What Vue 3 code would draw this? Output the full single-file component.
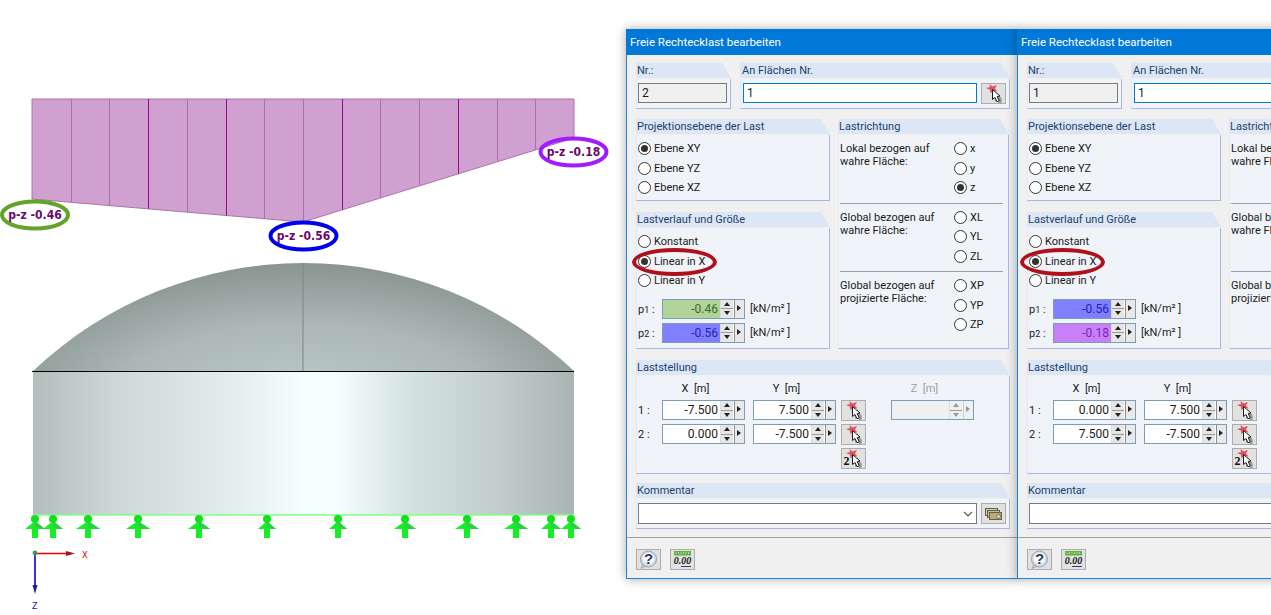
<template>
  <div class="page">
    <!-- model view -->
    <svg class="model" width="626" height="615" viewBox="0 0 626 615">
      <defs>
        <radialGradient id="domeFill" gradientUnits="userSpaceOnUse" cx="0" cy="0" r="140" gradientTransform="translate(303 400) scale(2.4 1)">
          <stop offset="0" stop-color="#bccaca" />
          <stop offset="0.55" stop-color="#abb8b6" />
          <stop offset="1" stop-color="#88928f" />
        </radialGradient>
        <linearGradient id="wallFill" x1="0" y1="0" x2="1" y2="0">
          <stop offset="0" stop-color="#b2bebc" />
          <stop offset="0.15" stop-color="#cbd8d6" />
          <stop offset="0.35" stop-color="#dfeceb" />
          <stop offset="0.5" stop-color="#f4ffff" />
          <stop offset="0.56" stop-color="#f4ffff" />
          <stop offset="0.7" stop-color="#d3e1df" />
          <stop offset="0.86" stop-color="#c0cdcb" />
          <stop offset="1" stop-color="#a9b5b3" />
        </linearGradient>
      </defs>

      <polygon points="32,99 574,99 574,138 303,222 32,199" fill="#d0a0d0" stroke="#ab74ab" stroke-width="1" />
      <line
        v-for="rib in ribs"
        :key="rib.x"
        :x1="rib.x"
        y1="99"
        :x2="rib.x"
        :y2="rib.y"
        :stroke="rib.color"
        stroke-width="1"
      />

      <g v-for="tag in tags" :key="tag.text">
        <ellipse :cx="tag.x" :cy="tag.y" rx="33" ry="13.5" fill="none" :stroke="tag.color" stroke-width="4" />
        <text :x="tag.x" :y="tag.y + 4" text-anchor="middle" class="tag-text">{{ tag.text }}</text>
      </g>

      <path d="M33 371 A393 393 0 0 1 574 371 Z" fill="url(#domeFill)" />
      <line x1="303" y1="263" x2="303" y2="371" stroke="#7b8785" stroke-width="1" />
      <rect x="33" y="372" width="541" height="143" fill="url(#wallFill)" />
      <line x1="32" y1="371.5" x2="574" y2="371.5" stroke="#000" stroke-width="1" />
      <line x1="33" y1="515" x2="574" y2="515" stroke="#80ff80" stroke-width="1.5" />

      <g v-for="s in supports" :key="s.x">
        <polygon :points="`${s.x},521 ${s.x + s.w},529 ${s.x - s.w},529`" fill="#12f025" />
        <polygon :points="`${s.x},521 ${s.x + s.w},529 ${s.x},529`" fill="#2fcf45" />
        <rect :x="s.x - 3" y="528" width="6" height="10" fill="#12f025" />
        <circle :cx="s.x" cy="519" r="4" fill="#10e020" />
      </g>

      <!-- axes -->
      <line x1="35" y1="553.5" x2="68" y2="553.5" stroke="#f00000" stroke-width="1.6" />
      <polygon points="66,551 75,553.5 66,556" fill="#a01818" />
      <text x="82" y="558" class="axis-x">X</text>
      <line x1="35" y1="553" x2="35" y2="588" stroke="#0000e0" stroke-width="1.6" />
      <polygon points="32.5,585 37.5,585 35,594" fill="#20208c" />
      <circle cx="35" cy="553" r="2.4" fill="#3c9a50" />
      <text x="32" y="609" class="axis-z">Z</text>
    </svg>

    <!-- shared button icons -->
    <svg class="icon-defs" width="0" height="0">
      <symbol id="pick" viewBox="0 0 25 21">
        <polygon points="8.5,1 11.5,3.4 16,2 14,5.6 16.5,8.4 12,7.6 9.5,10.5 9,6.8 5,5 9,4" fill="#e4505e" />
        <path d="M14 9 L14 19 L16.5 17.6 L18.5 20.5 L21 19 L20.5 15 Z" fill="#9a9a9a" />
        <path d="M11.5 6.5 L11.5 16.5 L14 14.5 L16 18.8 L18.2 17.7 L16.2 13.5 L19 13 Z" fill="#fff" stroke="#1a1a1a" stroke-width="1" stroke-linejoin="round" />
      </symbol>
    </svg>

    <div v-for="dlg in dialogs" :key="dlg.nr" class="dialog">
      <div class="title">Freie Rechtecklast bearbeiten</div>
      <div class="content">
        <div class="row-top">
          <section class="group nr-group">
            <div class="group-head">Nr.:</div>
            <div class="group-body pad-line">
              <div class="text-box readonly">{{ dlg.nr }}</div>
            </div>
          </section>
          <section class="group surf-group">
            <div class="group-head">An Flächen Nr.</div>
            <div class="group-body pad-line line-flex">
              <div class="text-box focused">1</div>
              <button class="tool-btn"><svg width="25" height="21"><use href="#pick" /></svg></button>
            </div>
          </section>
        </div>

        <div class="row-mid">
          <section class="group">
            <div class="group-head">Projektionsebene der Last</div>
            <div class="group-body radios-body">
              <label v-for="(r, i) in planes" :key="r" class="radio-row">
                <span class="radio" :class="{ on: i === 0 }"></span>{{ r }}
              </label>
            </div>
          </section>

          <section class="group direction">
            <div class="group-head">Lastrichtung</div>
            <div class="group-body dir-body">
              <div v-for="(d, i) in directions" :key="d.text" class="dir-section" :class="{ ruled: i > 0 }">
                <div class="dir-text">{{ d.text }}</div>
                <div>
                  <label v-for="o in d.options" :key="o" class="radio-row">
                    <span class="radio" :class="{ on: o === 'z' }"></span>{{ o }}
                  </label>
                </div>
              </div>
            </div>
          </section>

          <section class="group course">
            <div class="group-head">Lastverlauf und Größe</div>
            <div class="group-body radios-body">
              <label v-for="(r, i) in courses" :key="r" class="radio-row">
                <span class="radio" :class="{ on: i === 1 }"></span>{{ r }}
              </label>
              <div class="p-row first">
                <span class="row-label">p<small>1</small> :</span>
                <div class="spinner" :class="dlg.p1.tone">
                  <span class="spin-value">{{ dlg.p1.value }}</span>
                  <span class="spin-btns"><i class="up"></i><i class="down"></i></span>
                  <span class="spin-more"></span>
                </div>
                <span class="unit">[kN/m² ]</span>
              </div>
              <div class="p-row">
                <span class="row-label">p<small>2</small> :</span>
                <div class="spinner" :class="dlg.p2.tone">
                  <span class="spin-value">{{ dlg.p2.value }}</span>
                  <span class="spin-btns"><i class="up"></i><i class="down"></i></span>
                  <span class="spin-more"></span>
                </div>
                <span class="unit">[kN/m² ]</span>
              </div>
            </div>
            <div class="ring" :style="{ left: dlg.ringLeft + 'px' }"></div>
          </section>
        </div>

        <section class="group position">
          <div class="group-head">Laststellung</div>
          <div class="group-body pos-body">
            <div class="pos-line heads">
              <span class="row-label"></span>
              <span class="pos-head">X&nbsp; [m]</span>
              <span class="pos-head col-y">Y&nbsp; [m]</span>
              <span class="pos-head col-z muted">Z&nbsp; [m]</span>
            </div>
            <div v-for="(p, i) in dlg.pos" :key="i" class="pos-line">
              <span class="row-label">{{ i + 1 }} :</span>
              <div class="spinner">
                <span class="spin-value">{{ p[0] }}</span>
                <span class="spin-btns"><i class="up"></i><i class="down"></i></span>
                <span class="spin-more"></span>
              </div>
              <div class="spinner col-y">
                <span class="spin-value">{{ p[1] }}</span>
                <span class="spin-btns"><i class="up"></i><i class="down"></i></span>
                <span class="spin-more"></span>
              </div>
              <button class="tool-btn pick-col"><svg width="25" height="21"><use href="#pick" /></svg></button>
              <div v-if="i === 0" class="spinner col-z disabled">
                <span class="spin-value"></span>
                <span class="spin-btns"><i class="up"></i><i class="down"></i></span>
                <span class="spin-more"></span>
              </div>
            </div>
            <div class="pos-line">
              <button class="tool-btn pick-last">
                <svg width="25" height="21">
                  <use href="#pick" />
                  <text x="2.5" y="17" class="two">2</text>
                </svg>
              </button>
            </div>
          </div>
        </section>

        <section class="group comment">
          <div class="group-head">Kommentar</div>
          <div class="group-body pad-line line-flex">
            <div class="combo">
              <svg width="10" height="6" viewBox="0 0 10 6"><path d="M1 1 L5 5 L9 1" fill="none" stroke="#555" stroke-width="1.1" /></svg>
            </div>
            <button class="tool-btn">
              <svg width="25" height="21" viewBox="0 0 25 21">
                <rect x="4.5" y="5.5" width="12" height="7" fill="#d6cfa8" stroke="#5f5f4a" />
                <rect x="6.5" y="7.5" width="12" height="7" fill="#c9bf8e" stroke="#5f5f4a" />
                <rect x="8.5" y="9.5" width="12" height="7" fill="#bcae73" stroke="#5f5f4a" />
                <rect x="16" y="12" width="3" height="3" fill="#fff" stroke="#444" stroke-width="0.6" />
              </svg>
            </button>
          </div>
        </section>

        <div class="footer">
          <button class="tool-btn">
            <svg width="25" height="21" viewBox="0 0 25 21">
              <path d="M6.5 15 L5 19.5 L11 17 Z" fill="#c2c8d0" stroke="#8b93a0" stroke-width="0.5" />
              <circle cx="12.5" cy="10" r="8" fill="#d4dae2" stroke="#9aa3b0" />
              <circle cx="12.5" cy="9.5" r="5.8" fill="#f7f8fa" />
              <text x="12.5" y="15" text-anchor="middle" class="help-mark">?</text>
            </svg>
          </button>
          <button class="tool-btn">
            <svg width="25" height="21" viewBox="0 0 25 21">
              <rect x="4" y="2" width="17" height="4.5" fill="#62b044" />
              <path d="M6 3 V5 M8.5 3 V5 M11 3 V5 M13.5 3 V5 M16 3 V5 M18.5 3 V5" stroke="#bfe3a8" stroke-width="0.8" />
              <text x="12.5" y="15" text-anchor="middle" class="zero">0.00</text>
              <path d="M11 17.5 H21" stroke="#2b3f80" stroke-width="1" />
            </svg>
          </button>
        </div>
      </div>
    </div>
  </div>
</template>

<script setup>
const planes = ['Ebene XY', 'Ebene YZ', 'Ebene XZ']
const courses = ['Konstant', 'Linear in X', 'Linear in Y']

const directions = [
  { text: 'Lokal bezogen auf wahre Fläche:', options: ['x', 'y', 'z'] },
  { text: 'Global bezogen auf wahre Fläche:', options: ['XL', 'YL', 'ZL'] },
  { text: 'Global bezogen auf projizierte Fläche:', options: ['XP', 'YP', 'ZP'] }
]

const dialogs = [
  {
    nr: '2',
    ringLeft: -4,
    p1: { value: '-0.46', tone: 'green' },
    p2: { value: '-0.56', tone: 'blue' },
    pos: [['-7.500', '7.500'], ['0.000', '-7.500']]
  },
  {
    nr: '1',
    ringLeft: -7,
    p1: { value: '-0.56', tone: 'blue' },
    p2: { value: '-0.18', tone: 'purple' },
    pos: [['0.000', '7.500'], ['7.500', '-7.500']]
  }
]

const tags = [
  { text: 'p-z -0.46', x: 35, y: 215, color: '#62a32a' },
  { text: 'p-z -0.56', x: 303.5, y: 236, color: '#0000ee' },
  { text: 'p-z -0.18', x: 573.5, y: 152, color: '#a01cff' }
]

// load outline: left 199, peak 222 at the middle, right 138
function lowerEdge(x) {
  if (x <= 303) return 199 + ((x - 32) / 271) * 23
  return 222 - ((x - 303) / 271) * 84
}

const strong = [3, 5, 8, 11]
const ribs = Array.from({ length: 13 }, (_, i) => {
  const x = Math.round(32 + (i + 1) * 38.71) + 0.5
  return { x, y: lowerEdge(x), color: strong.includes(i + 1) ? '#8e0a8e' : '#a873a8' }
})

const supports = [
  { x: 35, w: 10 }, { x: 53, w: 10 }, { x: 88, w: 12 }, { x: 138, w: 12 },
  { x: 199, w: 11 }, { x: 267, w: 9 }, { x: 338, w: 9 }, { x: 405, w: 11 },
  { x: 467, w: 12 }, { x: 516, w: 12 }, { x: 551, w: 10 }, { x: 571, w: 10 }
]
</script>

<style>
html, body {
  margin: 0;
  background: #fff;
  overflow: hidden;
}
</style>

<style scoped>
.page {
  display: flex;
  width: 1271px;
  height: 615px;
  overflow: hidden;
  background: #fff;
  font-family: Roboto, 'Liberation Sans', sans-serif;
  font-size: 11px;
  color: #1a1a1a;
}

.model {
  flex: none;
  display: block;
}

.icon-defs {
  position: absolute;
}

.tag-text {
  font-family: 'DejaVu Sans Condensed', 'DejaVu Sans', sans-serif;
  font-size: 12px;
  font-weight: bold;
  fill: #6a0a6a;
}

.axis-x {
  font-size: 9px;
  fill: #d01010;
}

.axis-z {
  font-size: 9px;
  fill: #1010d0;
}

.dialog {
  flex: none;
  box-sizing: border-box;
  width: 392px;
  height: 550px;
  margin-top: 29px;
  margin-right: -1px;
  background: #f0f0f0;
  border: 1px solid #1a86dc;
  border-top: none;
  box-shadow: 0 0 10px rgba(0, 0, 0, 0.35);
}

.title {
  height: 26px;
  margin: 0 -1px;
  padding-left: 4px;
  line-height: 26px;
  background: #0078d7;
  color: #fff;
  font-family: Roboto, sans-serif;
  font-size: 11.5px;
}

.content {
  padding: 8px 7px 0 9px;
}

.row-top {
  display: flex;
  gap: 9px;
}

.nr-group {
  flex: none;
  width: 95px;
}

.surf-group {
  flex: 1;
}

.row-mid {
  display: grid;
  grid-template-columns: 194px 171px;
  grid-template-rows: 82px 137px;
  column-gap: 8px;
  row-gap: 11px;
  margin-top: 10px;
}

.group {
  position: relative;
  display: flex;
  flex-direction: column;
  min-width: 0;
}

.group-head {
  flex: none;
  height: 15px;
  padding-left: 1px;
  line-height: 15px;
  background: #dce6f4;
  color: #1d3f6e;
  clip-path: polygon(0 0, calc(100% - 9px) 0, 100% 100%, 0 100%);
}

.surf-group .group-head {
  padding-left: 2px;
}

.group-body {
  flex: 1;
  box-sizing: border-box;
  margin-top: 1px;
  background: #f0f4f9;
  border-right: 1px solid #a9b4e4;
  border-bottom: 1px solid #a9b4e4;
  border-left: 1px solid #e4e9f6;
}

.pad-line {
  padding: 4px 3px 4px 1px;
}

.surf-group .pad-line {
  padding-left: 2px;
}

.line-flex {
  display: flex;
  gap: 4px;
}

.text-box {
  box-sizing: border-box;
  flex: 1;
  height: 20px;
  padding-left: 3px;
  line-height: 18px;
  font-size: 12px;
  background: #fff;
}

.readonly {
  background: #f0f0f0;
  border: 1px solid #7a7a7a;
}

.focused {
  border: 1px solid #0078d7;
}

.tool-btn {
  flex: none;
  box-sizing: border-box;
  display: block;
  width: 25px;
  height: 21px;
  padding: 0;
  background: #e1e1e1;
  border: 1px solid #adadad;
}

.tool-btn svg {
  display: block;
  margin: -1px;
}

.radios-body {
  padding: 4px 0 0 1px;
}

.radio-row {
  display: flex;
  align-items: center;
  height: 19.5px;
}

.radio {
  box-sizing: border-box;
  flex: none;
  display: flex;
  align-items: center;
  justify-content: center;
  width: 13px;
  height: 13px;
  margin-right: 3px;
  background: #fff;
  border: 1px solid #333;
  border-radius: 50%;
}

.radio.on::after {
  content: '';
  width: 7px;
  height: 7px;
  border-radius: 50%;
  background: #333;
}

.direction {
  grid-column: 2;
  grid-row: 1 / span 2;
}

.course {
  grid-column: 1;
  grid-row: 2;
}

.dir-body {
  padding: 0 5px 0 1px;
}

.dir-section {
  display: flex;
  padding: 4px 0 5px;
}

.dir-section.ruled {
  border-top: 1px solid #a0a0a0;
}

.dir-text {
  width: 114px;
  padding-top: 3px;
  line-height: 13px;
}

.ring {
  position: absolute;
  top: 36px;
  width: 85px;
  height: 28px;
  box-sizing: border-box;
  border: 4px solid #b0101a;
  border-radius: 50%;
  pointer-events: none;
}

.p-row {
  display: flex;
  align-items: center;
  margin-top: 4px;
}

.p-row.first {
  margin-top: 8px;
}

.row-label {
  flex: none;
  width: 24px;
  padding-top: 2px;
}

.row-label small {
  font-size: 9px;
}

.unit {
  margin-left: 5px;
}

.spinner {
  flex: none;
  box-sizing: border-box;
  display: flex;
  width: 83px;
  height: 20px;
  background: #fff;
  border: 1px solid #7d9cb8;
}

.spin-value {
  flex: 1;
  padding-right: 2px;
  text-align: right;
  line-height: 18px;
  font-size: 12px;
}

.spin-btns {
  flex: none;
  display: flex;
  flex-direction: column;
  width: 12px;
  background: #e6e6e6;
  border-left: 1px solid #dcdcdc;
}

.spin-btns i {
  flex: 1;
  display: flex;
  align-items: center;
  justify-content: center;
}

.spin-btns i + i {
  border-top: 1px solid #9a9a9a;
}

.spin-btns i::after {
  content: '';
  border-left: 3.5px solid transparent;
  border-right: 3.5px solid transparent;
}

.spin-btns .up::after {
  border-bottom: 4px solid #222;
}

.spin-btns .down::after {
  border-top: 4px solid #222;
}

.spin-more {
  flex: none;
  position: relative;
  width: 9px;
  margin-left: 1px;
  background: #e9e9e9;
  border-left: 1px solid #8e8e8e;
}

.spin-more::after {
  content: '';
  position: absolute;
  top: 5px;
  left: 2px;
  border-top: 3.5px solid transparent;
  border-bottom: 3.5px solid transparent;
  border-left: 4px solid #222;
}

.spinner.green .spin-value {
  background: #b0d498;
  color: #3d6a2a;
}

.spinner.blue .spin-value {
  background: #8080ff;
  color: #2020c0;
}

.spinner.purple .spin-value {
  background: #c880f8;
  color: #8020b0;
}

.spinner.disabled {
  background: #eef0f2;
}

.spinner.disabled .spin-btns {
  background: #eef0f2;
}

.spinner.disabled .spin-btns .up::after {
  border-bottom-color: #9a9a9a;
}

.spinner.disabled .spin-btns .down::after {
  border-top-color: #9a9a9a;
}

.spinner.disabled .spin-more {
  background: #eef0f2;
  border-left-color: #cfcfcf;
}

.spinner.disabled .spin-more::after {
  border-left-color: #9a9a9a;
}

.position {
  height: 114px;
  margin-top: 11px;
}

.pos-body {
  padding: 6px 0 0 1px;
}

.pos-line {
  display: flex;
  height: 20px;
  margin-bottom: 4px;
}

.pos-line.heads {
  height: 13px;
  margin-bottom: 5px;
  line-height: 13px;
}

.pos-line > .row-label {
  line-height: 18px;
}

.pos-head {
  flex: none;
  width: 83px;
  text-align: center;
  padding-right: 16px;
  box-sizing: border-box;
}

.col-y {
  margin-left: 8px;
}

.col-z {
  margin-left: 25px;
}

.pos-head.col-z {
  margin-left: 55px;
}

.muted {
  color: #a0a0a0;
}

.pick-col {
  margin-left: 5px;
}

.pick-last {
  margin-left: 203px;
}

.two {
  font-family: 'Liberation Serif', serif;
  font-size: 12px;
  font-weight: bold;
  fill: #111;
}

.comment {
  height: 46px;
  margin-top: 9px;
}

.combo {
  box-sizing: border-box;
  flex: 1;
  display: flex;
  align-items: center;
  justify-content: flex-end;
  height: 21px;
  padding-right: 3px;
  background: #fff;
  border: 1px solid #7a7a7a;
}

.footer {
  display: flex;
  gap: 9px;
  margin: 8px -7px 0 -9px;
  padding: 11px 0 0 9px;
  border-top: 1px solid #a0a0a0;
}

.help-mark {
  font-family: 'Liberation Sans', sans-serif;
  font-size: 15px;
  font-weight: bold;
  fill: #2b3f60;
}

.zero {
  font-family: 'Liberation Serif', serif;
  font-size: 10px;
  font-style: italic;
  font-weight: bold;
  fill: #222;
}
</style>
